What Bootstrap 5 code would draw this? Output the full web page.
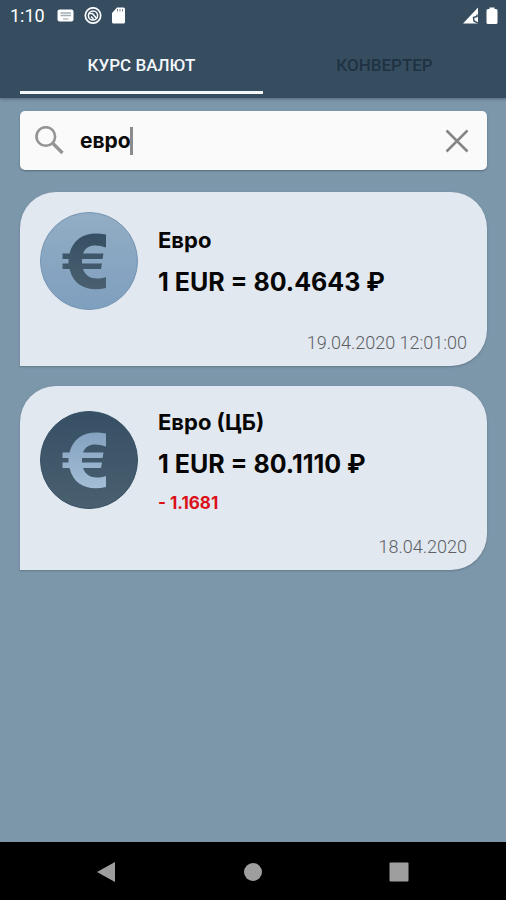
<!DOCTYPE html>
<html lang="ru">
<head>
<meta charset="utf-8">
<meta name="viewport" content="width=device-width, initial-scale=1">
<title>Курс валют</title>
<link href="https://cdn.jsdelivr.net/npm/bootstrap@5.3.0/dist/css/bootstrap.min.css" rel="stylesheet">
<style>
body { background: #7c96aa; font-family: Roboto, "Liberation Sans", sans-serif; }
.app-top { background: #364d60; box-shadow: 0 1px 3px rgba(40, 55, 70, .5); }
.status-row { height: 32px; padding: 0 8px 0 10px; font-size: 18px; line-height: 32px; }
.status-icons { gap: 9px; margin-left: 12px; }
.tab-row { padding-left: 20px; padding-bottom: 4px; }
.tab-btn { height: 62px; padding: 6px 0 0; font-size: 17px; line-height: 24px; font-weight: 500; color: #1f3242; background: none; border: 0; border-bottom: 3px solid transparent; }
.tab-btn.active { color: #f4f7f9; border-bottom-color: #f4f7f9; }
.page-body { padding: 13px 19px 20px 20px; }
.search-box { height: 59px; padding: 0 15px; background: #fafafa; border-radius: 5px; box-shadow: 0 1px 2px rgba(40, 55, 70, .45); margin-bottom: 22px; }
.search-field { margin-left: 15px; }
.search-field input { width: 100%; padding: 0; border: 0; outline: 0; background: none; color: #0b0b0b; font: 700 21px/32px Inter, sans-serif; }
.text-caret { left: 50px; top: 2px; width: 3px; height: 28px; background: #8b8b8e; }
.rate-card { background: #e2e8ef; border-radius: 36px 36px 36px 0; padding: 20px 20px 10px; margin-bottom: 20px; color: #060606; font-family: Inter, sans-serif; font-weight: 700; box-shadow: 0 1px 2px rgba(40, 55, 70, .3); }
.rate-text { padding-top: 12px; gap: 6px; }
.rate-text.three-line { padding-top: 0; }
.rate-name { font-size: 22px; line-height: 32px; }
.rate-value { font-size: 25px; line-height: 40px; }
.rate-delta { font-size: 17px; line-height: 26px; color: #dc1018; }
.rate-date { font: 300 18px/26px Roboto, sans-serif; color: #5c6065; }
.main-line { min-height: 118px; }
.main-line.tall { min-height: 128px; }
.tall .coin { margin-top: 5px; }
.sys-nav { background: #000; height: 58px; padding: 0 84px 0 83px; }
.sys-nav button { width: 46px; height: 46px; }
</style>
</head>
<body>
<svg class="position-absolute" width="0" height="0" aria-hidden="true">
  <defs>
    <linearGradient id="pale" x1="0" y1="0" x2="0" y2="1"><stop offset="0" stop-color="#92adc4"/><stop offset="1" stop-color="#7f9fbf"/></linearGradient>
    <linearGradient id="deep" x1="0" y1="0" x2="0" y2="1"><stop offset="0" stop-color="#364f64"/><stop offset="1" stop-color="#4a6070"/></linearGradient>
    <linearGradient id="light" x1="0" y1="0" x2="0" y2="1"><stop offset="0" stop-color="#84a2c0"/><stop offset="1" stop-color="#a3bdd5"/></linearGradient>
  </defs>
  <symbol id="euro-sign" viewBox="0 0 98 98">
    <path d="M66 22.500V35.500C55 31.500 46 33 43 41.500H63.500L62.500 47H42V51.500H62L61 57H43C46 66 55 68.500 66 65V76C49 80 34 75 29.500 57H22.500V51.500H28.500V47H22.500V41.500H29.500C34 25 47 19 66 22.500Z"/>
  </symbol>
</svg>
<div class="d-flex flex-column min-vh-100">
  <header class="app-top">
    <div class="status-row d-flex align-items-center text-white">
      <span>1:10</span>
      <div class="status-icons d-flex align-items-center">
        <svg width="18" height="18" viewBox="0 0 18 18" aria-hidden="true"><rect x=".5" y="2.500" width="16" height="12" rx="2" fill="#fff"/><path d="M3.500 6H14M3.500 8.500H14" stroke="#a3adb5" stroke-width="1.500"/><path d="M6 12H11.500" stroke="#a3adb5" stroke-width="1.200"/></svg>
        <svg width="18" height="18" viewBox="0 0 18 18" fill="none" stroke="#fff" aria-hidden="true"><circle cx="9" cy="8.500" r="7.700" stroke-width="1.700"/><circle cx="9" cy="8.500" r="4.600" stroke-width="1.500"/><path d="M5 6.500L8.500 6.500L12.500 11.500M7 9.500L9.500 12" stroke-width="1.500"/></svg>
        <svg width="16" height="18" viewBox="0 0 16 18" aria-hidden="true"><path d="M6 .5H12.500Q14 .5 14 2V15Q14 16.500 12.500 16.500H2.500Q1 16.500 1 15V6Z" fill="#fff"/><path d="M6.500 2V4.500M9 2V4.500M11.500 2V4.500" stroke="#7c8993" stroke-width="1"/></svg>
      </div>
      <div class="d-flex ms-auto gap-2">
        <svg width="17" height="18" viewBox="0 0 17 18" aria-hidden="true"><path d="M2 16.500L17 .5V16.500Z" fill="#fff"/><path d="M16 7.500V9.500L12.500 10.500L13 14L17 16" fill="none" stroke="#364d60" stroke-width="1.500"/></svg>
        <svg width="12" height="18" viewBox="0 0 12 18" aria-hidden="true"><path d="M3.500 2V.5H8.500V2H10Q11.500 2 11.500 3.500V15.500Q11.500 17 10 17H2Q.5 17 .5 15.500V3.500Q.5 2 2 2Z" fill="#fff"/></svg>
      </div>
    </div>
    <nav class="tab-row d-flex" role="tablist">
      <button class="tab-btn active flex-fill w-50" type="button" role="tab" aria-selected="true">КУРС ВАЛЮТ</button>
      <button class="tab-btn flex-fill w-50" type="button" role="tab" aria-selected="false">КОНВЕРТЕР</button>
    </nav>
  </header>

  <main class="page-body flex-grow-1">
    <div class="search-box d-flex align-items-center">
      <label for="query">
        <svg class="d-block" width="30" height="30" viewBox="0 0 30 30" fill="none" stroke="#949494" role="img" aria-label="Поиск"><circle cx="10.800" cy="10.500" r="9.300" stroke-width="2.600"/><path d="M18 17.500L27.500 27" stroke-width="3.400"/></svg>
      </label>
      <div class="search-field position-relative flex-grow-1">
        <input id="query" type="text" value="евро">
        <span class="text-caret position-absolute"></span>
      </div>
      <button class="btn p-0 border-0" type="button" aria-label="Очистить">
        <svg class="d-block" width="30" height="30" viewBox="0 0 30 30" fill="none" stroke="#858585" stroke-width="2.500" aria-hidden="true"><path d="M4.500 4.500L25.500 25.500M25.500 4.500L4.500 25.500"/></svg>
      </button>
    </div>

    <article class="rate-card">
      <div class="main-line d-flex align-items-start">
        <svg class="coin flex-shrink-0" width="98" height="98" viewBox="0 0 98 98" aria-hidden="true"><circle cx="49" cy="49" r="48.500" fill="url(#pale)" stroke="#7594b2"/><use href="#euro-sign" fill="url(#deep)"/></svg>
        <div class="rate-text d-flex flex-column ps-3 ms-1">
          <div class="rate-name">Евро</div>
          <div class="rate-value">1 EUR = 80.4643 ₽</div>
        </div>
      </div>
      <div class="rate-date text-end">19.04.2020 12:01:00</div>
    </article>

    <article class="rate-card">
      <div class="main-line tall d-flex align-items-start">
        <svg class="coin flex-shrink-0" width="98" height="98" viewBox="0 0 98 98" aria-hidden="true"><circle cx="49" cy="49" r="48.500" fill="url(#deep)" stroke="#364f64"/><use href="#euro-sign" fill="url(#light)"/></svg>
        <div class="rate-text three-line d-flex flex-column ps-3 ms-1">
          <div class="rate-name">Евро (ЦБ)</div>
          <div class="rate-value">1 EUR = 80.1110 ₽</div>
          <div class="rate-delta">- 1.1681</div>
        </div>
      </div>
      <div class="rate-date text-end">18.04.2020</div>
    </article>
  </main>

  <footer class="sys-nav d-flex align-items-center justify-content-between">
    <button class="btn p-0 border-0" type="button" aria-label="Назад"><svg width="20" height="22" viewBox="0 0 20 22" aria-hidden="true"><path d="M1 11L19 1V21Z" fill="#9e9e9e"/></svg></button>
    <button class="btn p-0 border-0" type="button" aria-label="Домой"><svg width="20" height="20" viewBox="0 0 20 20" aria-hidden="true"><circle cx="10" cy="10" r="9" fill="#9e9e9e"/></svg></button>
    <button class="btn p-0 border-0" type="button" aria-label="Недавние"><svg width="20" height="20" viewBox="0 0 20 20" aria-hidden="true"><rect x=".5" y=".5" width="19" height="19" rx="1" fill="#9e9e9e"/></svg></button>
  </footer>
</div>
<script src="https://cdn.jsdelivr.net/npm/bootstrap@5.3.0/dist/js/bootstrap.bundle.min.js"></script>
</body>
</html>
